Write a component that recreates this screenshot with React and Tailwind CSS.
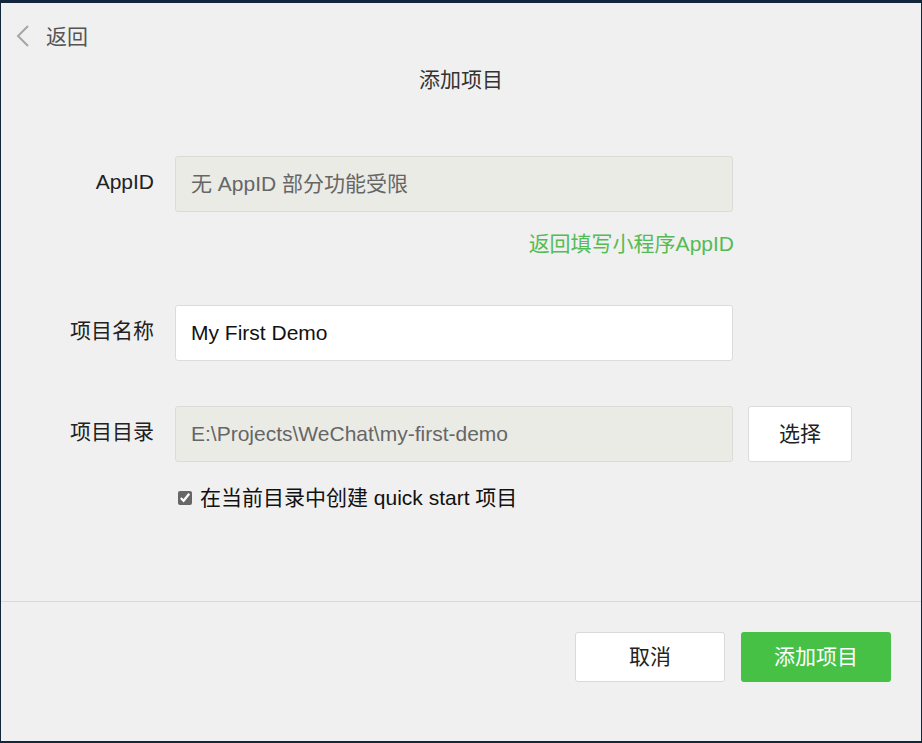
import React, { useState } from 'react';

const font = { fontFamily: '"Liberation Sans", "Noto Sans CJK SC", sans-serif' };

const App = () => {
  const [name, setName] = useState('My First Demo');
  const [quickStart, setQuickStart] = useState(true);

  return (
    <div
      className="w-[922px] h-[743px] bg-[#f0f0f0] border-t-[3px] border-b-[2px] border-l border-r border-[#13273b] flex flex-col"
      style={font}
    >
      {/* header */}
      <div className="h-[26px] mt-[20px] px-[14px] flex items-center">
        <button className="flex items-center text-[#555] text-[21px] leading-none">
          <svg width="18" height="24" viewBox="0 0 18 24" className="mr-[13px]">
            <path d="M13 2 L3 12 L13 22" fill="none" stroke="#a6a6a6" strokeWidth="2" />
          </svg>
          返回
        </button>
      </div>
      <h1 className="text-center text-[21px] text-[#333] mt-[16px] leading-[30px]">添加项目</h1>

      {/* form */}
      <div className="mt-[61px] flex flex-col">
        <div className="flex items-center">
          <label className="w-[153px] text-right text-[21px] text-[#222] -mt-[4px]">AppID</label>
          <div className="ml-[21px] w-[558px] h-[56px] bg-[#ebebe6] border border-[#dcdcd6] rounded-[3px] flex items-center px-[15px] text-[21px] text-[#666]">
            无 AppID 部分功能受限
          </div>
        </div>
        <div className="w-[733px] text-right mt-[18px] text-[21px] text-[#55bb55] leading-[28px]">
          <a href="#">返回填写小程序AppID</a>
        </div>

        <div className="flex items-center mt-[47px]">
          <label className="w-[153px] text-right text-[21px] text-[#222] -mt-[5px]">项目名称</label>
          <input
            value={name}
            onChange={(e) => setName(e.target.value)}
            className="ml-[21px] w-[558px] h-[56px] bg-white border border-[#dcdcdc] rounded-[3px] px-[15px] text-[21px] text-[#111] outline-none"
          />
        </div>

        <div className="flex items-center mt-[45px]">
          <label className="w-[153px] text-right text-[21px] text-[#222] -mt-[5px]">项目目录</label>
          <div className="ml-[21px] w-[558px] h-[56px] bg-[#ebebe6] border border-[#dcdcd6] rounded-[3px] flex items-center px-[15px] text-[21px] text-[#666]">
            E:\Projects\WeChat\my-first-demo
          </div>
          <button className="ml-[15px] w-[104px] h-[56px] bg-white border border-[#dcdcdc] rounded-[3px] text-[21px] text-[#222]">
            选择
          </button>
        </div>

        <label className="flex items-center ml-[177px] mt-[20px] text-[21px] text-[#111] cursor-pointer">
          <input
            type="checkbox"
            checked={quickStart}
            onChange={(e) => setQuickStart(e.target.checked)}
            className="w-[14px] h-[14px] mr-[8px] accent-[#666]"
          />
          在当前目录中创建 quick start 项目
        </label>
      </div>

      <div className="flex-1" />

      {/* footer */}
      <div className="border-t border-[#d9d9d9] h-[140px] flex justify-end items-start pt-[30px] pr-[30px] gap-[16px]">
        <button className="w-[150px] h-[50px] bg-white border border-[#d9d9d9] rounded-[3px] text-[21px] text-[#222]">
          取消
        </button>
        <button className="w-[150px] h-[50px] bg-[#46c146] rounded-[3px] text-[21px] text-white">
          添加项目
        </button>
      </div>
    </div>
  );
};

export default App;
